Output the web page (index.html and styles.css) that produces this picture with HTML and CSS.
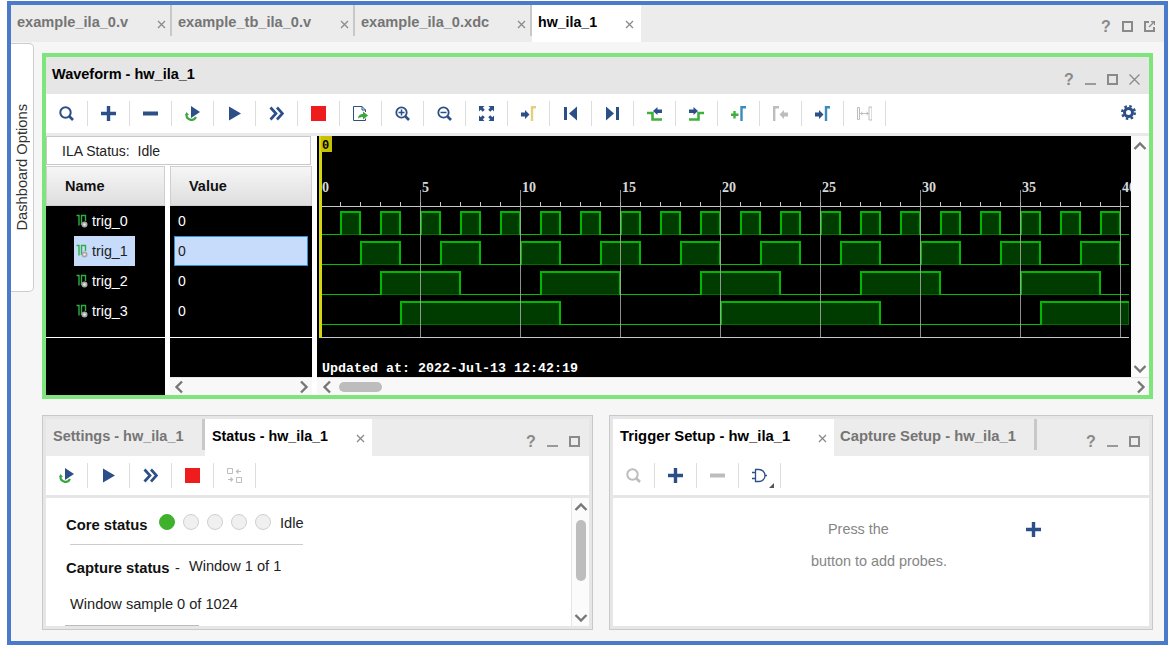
FILE: index.html
```html
<!DOCTYPE html>
<html lang="en">

<head>
    <meta charset="UTF-8">
    <title>hw_ila_1</title>
    <link rel="stylesheet" href="styles.css">
</head>

<body>
    <!-- shared icons -->
    <svg class="sprite">
        <symbol id="i-search" viewBox="0 0 15 15">
            <circle cx="6.5" cy="6.5" r="5.2" fill="none" stroke="currentColor" stroke-width="2" />
            <path d="M10.5 10.5l3.5 3.5" stroke="currentColor" stroke-width="2.6" />
        </symbol>
        <symbol id="i-plus" viewBox="0 0 15 15">
            <path d="M7.5 0v15M0 7.5h15" stroke="currentColor" stroke-width="3.4" />
        </symbol>
        <symbol id="i-minus" viewBox="0 0 15 15">
            <rect y="5.5" width="15" height="4" fill="currentColor" />
        </symbol>
        <symbol id="i-run" viewBox="0 0 15 15">
            <path d="M1.5 8.5a5 5 0 0 0 9.5 2.5" fill="none" stroke="#3ba63b" stroke-width="2.2" />
            <path d="M0 9l1.5-3 2.5 3z" fill="#3ba63b" />
            <path d="M6 0l9 6-9 6z" fill="currentColor" />
        </symbol>
        <symbol id="i-play" viewBox="0 0 15 15">
            <path d="M2 .5L14 7.5 2 14.5z" fill="currentColor" />
        </symbol>
        <symbol id="i-ff" viewBox="0 0 15 15">
            <path d="M1.5 1.5L7 7.5 1.5 13.5M8 1.5l5.5 6-5.5 6" fill="none" stroke="currentColor" stroke-width="2.7" />
        </symbol>
        <symbol id="i-stop" viewBox="0 0 15 15">
            <rect width="15" height="15" fill="#ee1c1c" />
        </symbol>
        <symbol id="i-export" viewBox="0 0 15 15">
            <path d="M.5.5H9L12.5 4v2M12.5 12.5v2H.5V.5M9 .5V4h3.5" fill="none" stroke="currentColor" />
            <path d="M5 12.5c0-3 2-4.5 5-4.5V5.5l5 4-5 4V11c-2 0-3.5.5-5 1.5z" fill="#3ba63b" />
        </symbol>
        <symbol id="i-zoomin" viewBox="0 0 15 15">
            <circle cx="6.5" cy="6.5" r="5.2" fill="none" stroke="currentColor" stroke-width="1.8" />
            <path d="M3.5 6.5h6M6.5 3.5v6" stroke="currentColor" stroke-width="1.5" />
            <path d="M10.5 10.5l3.5 3.5" stroke="currentColor" stroke-width="2.6" />
        </symbol>
        <symbol id="i-zoomout" viewBox="0 0 15 15">
            <circle cx="6.5" cy="6.5" r="5.2" fill="none" stroke="currentColor" stroke-width="1.8" />
            <path d="M3.5 6.5h6" stroke="currentColor" stroke-width="1.5" />
            <path d="M10.5 10.5l3.5 3.5" stroke="currentColor" stroke-width="2.6" />
        </symbol>
        <symbol id="i-fit" viewBox="0 0 15 15">
            <path d="M0 0h5.5L3.8 1.7l2 2-2.1 2.1-2-2L0 5.5z" fill="currentColor" />
            <path d="M15 0H9.5l1.7 1.7-2 2 2.1 2.1 2-2L15 5.5z" fill="currentColor" />
            <path d="M0 15h5.5l-1.7-1.7 2-2-2.1-2.1-2 2L0 9.5z" fill="currentColor" />
            <path d="M15 15H9.5l1.7-1.7-2-2 2.1-2.1 2 2 1.700-1.700z" fill="currentColor" />
        </symbol>
        <symbol id="i-cursor" viewBox="0 0 15 15">
            <path d="M0 6.5h4V4l4.5 4.5L4 13v-2.500H0z" fill="currentColor" />
            <path d="M11 15V1.200h4" fill="none" stroke="#e5cf7a" stroke-width="2.400" />
        </symbol>
        <symbol id="i-first" viewBox="0 0 15 15">
            <path d="M1 1h3v13H1zM14 .5v14L6 7.500z" fill="currentColor" />
        </symbol>
        <symbol id="i-last" viewBox="0 0 15 15">
            <path d="M11 1h3v13h-3zM1 .5v14l8-7z" fill="currentColor" />
        </symbol>
        <symbol id="i-prevedge" viewBox="0 0 15 15">
            <path d="M0 7h5.500v6.500H15" fill="none" stroke="#3fb03f" stroke-width="2.600" />
            <path d="M15 3.500h-4.500v-2.500l-4.500 4 4.500 4V7H15z" fill="currentColor" />
        </symbol>
        <symbol id="i-nextedge" viewBox="0 0 15 15">
            <path d="M0 13.500h9.500V7H15" fill="none" stroke="#3fb03f" stroke-width="2.600" />
            <path d="M0 3.500h4.500v-2.500l4.500 4-4.500 4V7H0z" fill="currentColor" />
        </symbol>
        <symbol id="i-addmark" viewBox="0 0 15 15">
            <path d="M3.500 5v7.500M0 8.700h7.500" stroke="#3fb03f" stroke-width="2.400" />
            <path d="M10.500 15V1.200H15" fill="none" stroke="#3a8dbb" stroke-width="2.400" />
        </symbol>
        <symbol id="i-prevmark" viewBox="0 0 15 15">
            <path d="M1.200 15V1.200H6" fill="none" stroke="currentColor" stroke-width="2.400" />
            <path d="M15 6.500h-4V4L6.500 8.500 11 13v-2.500h4z" fill="currentColor" />
        </symbol>
        <symbol id="i-nextmark" viewBox="0 0 15 15">
            <path d="M0 6.500h4V4l4.500 4.500L4 13v-2.500H0z" fill="currentColor" />
            <path d="M11 15V1.200h4" fill="none" stroke="#3a8dbb" stroke-width="2.400" />
        </symbol>
        <symbol id="i-gap" viewBox="0 0 15 15">
            <path d="M.500 1.500h2v12h-2zM12 1h3v13h-3z" fill="none" stroke="currentColor" />
            <path d="M3.500 7.500h8M5.500 6l-2 1.500 2 1.500M9.500 6l2 1.500-2 1.500" fill="none" stroke="currentColor" />
        </symbol>
        <symbol id="i-gear" viewBox="0 0 15 15">
            <circle cx="7.500" cy="7.500" r="6.300" fill="none" stroke="currentColor" stroke-width="2.400" stroke-dasharray="2.500 2.450" />
            <circle cx="7.500" cy="7.500" r="4" fill="none" stroke="currentColor" stroke-width="3" />
        </symbol>
        <symbol id="i-swap" viewBox="0 0 15 15">
            <path d="M.500.500h5v5h-5zM9.500 9.500h5v5h-5z" fill="none" stroke="currentColor" />
            <path d="M14 3.500H10M11.500 1.500L9.500 3.500l2 2M1 11.500h4M3.500 9.500l2 2-2 2" fill="none" stroke="currentColor" stroke-width="1.200" />
        </symbol>
        <symbol id="i-gate" viewBox="0 0 15 15">
            <path d="M3.500 1.500H7a6 6 0 0 1 0 12H3.500z" fill="none" stroke="currentColor" stroke-width="1.300" />
            <path d="M0 4.500h3.500M0 10.500h3.500M13 7.500h2" stroke="currentColor" stroke-width="1.300" />
        </symbol>
        <symbol id="i-signal" viewBox="0 0 12 14">
            <path d="M.500 1.500h2.500v10M5.500 11V1.500h4V7" fill="none" stroke="#2fae45" stroke-width="1.400" />
            <circle cx="8.500" cy="10.500" r="3" fill="#a6a6a6" />
            <circle cx="8.500" cy="10.500" r="1.200" fill="#eee" />
        </symbol>
        <symbol id="i-close" viewBox="0 0 9 9">
            <path d="M1 1l7 7M8 1L1 8" stroke="#8a8a8a" stroke-width="1.300" />
        </symbol>
        <symbol id="i-winclose" viewBox="0 0 11 11">
            <path d="M.500.500l10 10M10.500.500l-10 10" stroke="#8a8a8a" stroke-width="1.300" />
        </symbol>
        <symbol id="i-min" viewBox="0 0 11 11">
            <rect y="9" width="11" height="2" fill="#9a9a9a" />
        </symbol>
        <symbol id="i-max" viewBox="0 0 11 11">
            <rect x="1" y="1" width="9" height="9" fill="none" stroke="#8a8a8a" stroke-width="2" />
        </symbol>
        <symbol id="i-float" viewBox="0 0 11 11">
            <path d="M5 1H1v9h9V6" fill="none" stroke="#8a8a8a" stroke-width="2" />
            <path d="M5 6l5-5M7 .500h3.500V4" fill="none" stroke="#8a8a8a" stroke-width="1.300" />
        </symbol>
        <symbol id="i-chev" viewBox="0 0 14 14">
            <path d="M1.500 10L7 4.500l5.500 5.500" fill="none" stroke="#777" stroke-width="2.400" />
        </symbol>
    </svg>

    <div class="frame">
        <div class="tabbar">
            <div class="tab w-ila">
                <span>example_ila_0.v</span>
                <svg class="close"><use href="#i-close" /></svg>
            </div>
            <div class="tab w-tb">
                <span>example_tb_ila_0.v</span>
                <svg class="close"><use href="#i-close" /></svg>
            </div>
            <div class="tab w-xdc">
                <span>example_ila_0.xdc</span>
                <svg class="close"><use href="#i-close" /></svg>
            </div>
            <div class="tab active w-hw">
                <span>hw_ila_1</span>
                <svg class="close"><use href="#i-close" /></svg>
            </div>
            <div class="win-icons top">
                <span class="help">?</span>
                <svg class="win"><use href="#i-max" /></svg>
                <svg class="win"><use href="#i-float" /></svg>
            </div>
        </div>

        <div class="workspace">
            <div class="side-tab"><span>Dashboard Options</span></div>

            <div class="panels">
                <div class="waveform">
                    <div class="wave-head">
                        <span class="wave-title">Waveform - hw_ila_1</span>
                        <div class="win-icons">
                            <span class="help">?</span>
                            <svg class="win"><use href="#i-min" /></svg>
                            <svg class="win"><use href="#i-max" /></svg>
                            <svg class="win"><use href="#i-winclose" /></svg>
                        </div>
                    </div>

                    <div class="toolbar">
                        <div class="btn"><svg class="ic"><use href="#i-search" /></svg></div>
                        <div class="btn"><svg class="ic"><use href="#i-plus" /></svg></div>
                        <div class="btn"><svg class="ic"><use href="#i-minus" /></svg></div>
                        <div class="btn"><svg class="ic"><use href="#i-run" /></svg></div>
                        <div class="btn"><svg class="ic"><use href="#i-play" /></svg></div>
                        <div class="btn"><svg class="ic"><use href="#i-ff" /></svg></div>
                        <div class="btn"><svg class="ic"><use href="#i-stop" /></svg></div>
                        <div class="btn"><svg class="ic"><use href="#i-export" /></svg></div>
                        <div class="btn"><svg class="ic"><use href="#i-zoomin" /></svg></div>
                        <div class="btn"><svg class="ic"><use href="#i-zoomout" /></svg></div>
                        <div class="btn"><svg class="ic"><use href="#i-fit" /></svg></div>
                        <div class="btn"><svg class="ic"><use href="#i-cursor" /></svg></div>
                        <div class="btn"><svg class="ic"><use href="#i-first" /></svg></div>
                        <div class="btn"><svg class="ic"><use href="#i-last" /></svg></div>
                        <div class="btn"><svg class="ic"><use href="#i-prevedge" /></svg></div>
                        <div class="btn"><svg class="ic"><use href="#i-nextedge" /></svg></div>
                        <div class="btn"><svg class="ic"><use href="#i-addmark" /></svg></div>
                        <div class="btn"><svg class="ic off"><use href="#i-prevmark" /></svg></div>
                        <div class="btn"><svg class="ic"><use href="#i-nextmark" /></svg></div>
                        <div class="btn"><svg class="ic off"><use href="#i-gap" /></svg></div>
                        <div class="gear"><svg class="ic"><use href="#i-gear" /></svg></div>
                    </div>

                    <div class="wave-body">
                        <div class="signals">
                            <div class="ila-status">ILA Status:&nbsp; Idle</div>
                            <div class="sig-cols">
                                <div class="names">
                                    <div class="col-head name-head">Name</div>
                                    <div class="sig-row"><span class="sig-name"><svg class="sig-ic"><use href="#i-signal" /></svg>trig_0</span></div>
                                    <div class="sig-row"><span class="sig-name selected"><svg class="sig-ic"><use href="#i-signal" /></svg>trig_1</span></div>
                                    <div class="sig-row"><span class="sig-name"><svg class="sig-ic"><use href="#i-signal" /></svg>trig_2</span></div>
                                    <div class="sig-row"><span class="sig-name"><svg class="sig-ic"><use href="#i-signal" /></svg>trig_3</span></div>
                                    <div class="col-rule"></div>
                                </div>
                                <div class="values">
                                    <div class="col-head value-head">Value</div>
                                    <div class="val-rows">
                                        <div class="val-row">0</div>
                                        <div class="val-row selected">0</div>
                                        <div class="val-row">0</div>
                                        <div class="val-row">0</div>
                                        <div class="col-rule"></div>
                                    </div>
                                    <div class="hscroll val-scroll">
                                        <svg class="chev left"><use href="#i-chev" /></svg>
                                        <svg class="chev right"><use href="#i-chev" /></svg>
                                    </div>
                                </div>
                            </div>
                        </div>

                        <div class="wave-view">
                            <div class="wave-top">
                                <svg class="wave-svg" viewBox="317 136 814 241">
                                    <rect x="317" y="136" width="814" height="241" fill="#000" />

                                    <path class="ruler" d="M322 206.500H1129M322 337.500H1129" />
                                    <path class="ticks" d="M340 204H1130" />
                                    <path class="ruler" d="M321.500 182V206" />

                                    <path class="low" d="M322 234.500H1129M322 264.500H1129M322 294.500H1129M322 324.500H1129" />

                                    <!-- trig_0 -->
                                    <path class="block" d="M340.500 211.500h20v23h-20z m40 0h20v23h-20z m40 0h20v23h-20z m40 0h20v23h-20z m40 0h20v23h-20z m40 0h20v23h-20z m40 0h20v23h-20z m40 0h20v23h-20z m40 0h20v23h-20z m40 0h20v23h-20z m40 0h20v23h-20z m40 0h20v23h-20z m40 0h20v23h-20z m40 0h20v23h-20z m40 0h20v23h-20z m40 0h20v23h-20z m40 0h20v23h-20z m40 0h20v23h-20z m40 0h20v23h-20z m40 0h20v23h-20z" />
                                    <path class="edge" d="M341 235v-23h19v23 m21 0v-23h19v23 m21 0v-23h19v23 m21 0v-23h19v23 m21 0v-23h19v23 m21 0v-23h19v23 m21 0v-23h19v23 m21 0v-23h19v23 m21 0v-23h19v23 m21 0v-23h19v23 m21 0v-23h19v23 m21 0v-23h19v23 m21 0v-23h19v23 m21 0v-23h19v23 m21 0v-23h19v23 m21 0v-23h19v23 m21 0v-23h19v23 m21 0v-23h19v23 m21 0v-23h19v23 m21 0v-23h19v23" />

                                    <!-- trig_1 -->
                                    <path class="block" d="M360.500 241.500h40v23h-40z m80 0h40v23h-40z m80 0h40v23h-40z m80 0h40v23h-40z m80 0h40v23h-40z m80 0h40v23h-40z m80 0h40v23h-40z m80 0h40v23h-40z m80 0h40v23h-40z m80 0h40v23h-40z" />
                                    <path class="edge" d="M361 265v-23h39v23 m41 0v-23h39v23 m41 0v-23h39v23 m41 0v-23h39v23 m41 0v-23h39v23 m41 0v-23h39v23 m41 0v-23h39v23 m41 0v-23h39v23 m41 0v-23h39v23 m41 0v-23h39v23" />

                                    <!-- trig_2 -->
                                    <path class="block" d="M380.500 271.500h80v23h-80z m160 0h80v23h-80z m160 0h80v23h-80z m160 0h80v23h-80z m160 0h80v23h-80z" />
                                    <path class="edge" d="M381 295v-23h79v23 m81 0v-23h79v23 m81 0v-23h79v23 m81 0v-23h79v23 m81 0v-23h79v23" />

                                    <!-- trig_3 -->
                                    <path class="block" d="M400.500 301.500h160v23h-160z m320 0h160v23h-160z m320 0h88v23h-88z" />
                                    <path class="edge" d="M401 325v-23h159v23 m161 0v-23h159v23 m161 0v-23h88" />

                                    <path class="major" d="M420.500 190V337M520.500 190V337M620.500 190V337M720.500 190V337M820.500 190V337M920.500 190V337M1020.500 190V337M1120.500 190V337" />

                                    <g class="ruler-num">
                                        <text x="322" y="192">0</text>
                                        <text x="422" y="192">5</text>
                                        <text x="522" y="192">10</text>
                                        <text x="622" y="192">15</text>
                                        <text x="722" y="192">20</text>
                                        <text x="822" y="192">25</text>
                                        <text x="922" y="192">30</text>
                                        <text x="1022" y="192">35</text>
                                        <text x="1122" y="192">40</text>
                                    </g>

                                    <rect x="319" y="136" width="3" height="202" fill="#d6d610" />
                                    <rect x="321" y="136" width="11" height="16" fill="#c8c000" />
                                    <text class="cursor-num" x="322" y="149">0</text>

                                    <text class="updated" x="322" y="372">Updated at: 2022-Jul-13 12:42:19</text>
                                </svg>
                                <div class="vscroll">
                                    <svg class="chev"><use href="#i-chev" /></svg>
                                    <svg class="chev down"><use href="#i-chev" /></svg>
                                </div>
                            </div>
                            <div class="hscroll wave-scroll">
                                <svg class="chev left"><use href="#i-chev" /></svg>
                                <div class="hthumb"></div>
                                <svg class="chev right"><use href="#i-chev" /></svg>
                            </div>
                        </div>
                    </div>
                </div>

                <div class="bottom-row">
                    <div class="panel status-panel">
                        <div class="panel-tabs">
                            <div class="tab w-settings"><span>Settings - hw_ila_1</span></div>
                            <div class="tab active w-status">
                                <span>Status - hw_ila_1</span>
                                <svg class="close"><use href="#i-close" /></svg>
                            </div>
                            <div class="win-icons">
                                <span class="help">?</span>
                                <svg class="win"><use href="#i-min" /></svg>
                                <svg class="win"><use href="#i-max" /></svg>
                            </div>
                        </div>
                        <div class="toolbar">
                            <div class="btn"><svg class="ic"><use href="#i-run" /></svg></div>
                            <div class="btn"><svg class="ic"><use href="#i-play" /></svg></div>
                            <div class="btn"><svg class="ic"><use href="#i-ff" /></svg></div>
                            <div class="btn"><svg class="ic"><use href="#i-stop" /></svg></div>
                            <div class="btn"><svg class="ic off"><use href="#i-swap" /></svg></div>
                        </div>
                        <div class="panel-body">
                            <div class="status-body">
                                <div class="core-row">
                                    <b class="core-label">Core status</b>
                                    <span class="lamp on"></span>
                                    <span class="lamp"></span>
                                    <span class="lamp"></span>
                                    <span class="lamp"></span>
                                    <span class="lamp"></span>
                                    <span class="core-state">Idle</span>
                                </div>
                                <div class="rule-long"></div>
                                <div class="capture-row">
                                    <b class="capture-label">Capture status</b>
                                    <span class="capture-dash">-</span>
                                    <span class="capture-win">Window 1 of 1</span>
                                </div>
                                <div class="sample">Window sample 0 of 1024</div>
                                <div class="rule-short"></div>
                            </div>
                            <div class="vscroll status-scroll">
                                <svg class="chev"><use href="#i-chev" /></svg>
                                <div class="vthumb"></div>
                                <svg class="chev down"><use href="#i-chev" /></svg>
                            </div>
                        </div>
                    </div>

                    <div class="panel trigger-panel">
                        <div class="panel-tabs">
                            <div class="tab active w-trigger">
                                <span>Trigger Setup - hw_ila_1</span>
                                <svg class="close"><use href="#i-close" /></svg>
                            </div>
                            <div class="tab w-capture"><span>Capture Setup - hw_ila_1</span></div>
                            <div class="win-icons">
                                <span class="help">?</span>
                                <svg class="win"><use href="#i-min" /></svg>
                                <svg class="win"><use href="#i-max" /></svg>
                            </div>
                        </div>
                        <div class="toolbar">
                            <div class="btn"><svg class="ic off"><use href="#i-search" /></svg></div>
                            <div class="btn"><svg class="ic"><use href="#i-plus" /></svg></div>
                            <div class="btn"><svg class="ic off"><use href="#i-minus" /></svg></div>
                            <div class="btn more"><svg class="ic"><use href="#i-gate" /></svg></div>
                        </div>
                        <div class="panel-body hint">
                            <div class="hint-top">
                                <span>Press the</span>
                                <svg class="ic"><use href="#i-plus" /></svg>
                            </div>
                            <div class="hint-bottom">button to add probes.</div>
                        </div>
                    </div>
                </div>
            </div>
        </div>
    </div>
</body>

</html>
```

FILE: styles.css
```css
* {
    margin: 0;
    padding: 0;
    box-sizing: border-box;
}

body {
    background-color: #fff;
    font-family: "Liberation Sans", Arial, sans-serif;
    font-size: 14px;
    line-height: 16px;
    color: #222;
    overflow: hidden;
}

.sprite {
    display: none;
}

.frame {
    display: flex;
    flex-direction: column;
    width: 1161px;
    height: 644px;
    margin: 1px 0 0 7px;
    border: 4px solid #4a7bcb;
    background-color: #f6f6f6;
}

/* tabs */
.tabbar,
.panel-tabs {
    display: flex;
    align-items: flex-start;
    height: 37px;
    flex-shrink: 0;
    background-color: #ececec;
}

.tab {
    display: flex;
    align-items: flex-start;
    height: 31px;
    padding: 9px 0 0 6px;
    border-right: 2px solid #c8c8c8;
    font-size: 14.6px;
    font-weight: bold;
    color: #757575;
}

.tab.active {
    height: 37px;
    border-right: 0;
    background-color: #fff;
    color: #000;
}

.close {
    width: 9px;
    height: 9px;
    margin: 6px 4px 0 auto;
}

.tab.active .close {
    margin-right: 7px;
}

.w-ila { width: 161px; }
.w-tb { width: 183px; }
.w-xdc { width: 177px; }
.w-hw { width: 109px; font-size: 14.2px; }
.w-settings { width: 159px; padding-left: 7px; border-right-width: 3px; font-size: 14.5px; }
.w-status { width: 167px; padding-left: 7px; font-size: 14.3px; }
.w-trigger { width: 221px; padding-left: 7px; font-size: 14.8px; }
.w-capture { width: 203px; border-right-width: 3px; font-size: 14.8px; }

.win-icons {
    display: flex;
    align-items: flex-start;
    gap: 11px;
    margin-left: auto;
    padding: 17px 9px 0 0;
}

.win-icons.top {
    padding-top: 16px;
}

.win {
    width: 11px;
    height: 11px;
}

.help {
    width: 9px;
    margin-right: 1px;
    font-size: 16px;
    font-weight: bold;
    line-height: 12px;
    color: #8a8a8a;
}

/* main area */
.workspace {
    display: flex;
    flex: 1;
}

.side-tab {
    display: flex;
    align-items: center;
    justify-content: center;
    width: 23px;
    height: 249px;
    margin-top: 1px;
    border: 1px solid #ccc;
    border-left: 0;
    border-radius: 0 5px 5px 0;
    background-color: #fff;
    color: #333;
}

.side-tab span {
    writing-mode: vertical-rl;
    transform: rotate(180deg);
    font-size: 14.7px;
    white-space: nowrap;
}

.panels {
    display: flex;
    flex-direction: column;
    gap: 16px;
    width: 1119px;
    padding: 11px 0 0 8px;
}

.waveform {
    display: flex;
    flex-direction: column;
    width: 1111px;
    height: 346px;
    border: 4px solid #7de57a;
    background-color: #fff;
}

.wave-head {
    display: flex;
    align-items: flex-start;
    height: 37px;
    flex-shrink: 0;
    background-color: #e6e6e6;
}

.wave-title {
    padding: 9px 0 0 6px;
    font-size: 14.5px;
    font-weight: bold;
    color: #000;
}

/* toolbars */
.toolbar {
    display: flex;
    height: 42px;
    flex-shrink: 0;
    padding: 7px 0 10px;
    border-bottom: 3px solid #e9e9e9;
    background-color: #fff;
}

.btn {
    position: relative;
    display: flex;
    align-items: center;
    justify-content: center;
    width: 42px;
    height: 25px;
    padding-right: 1px;
    border-right: 1px solid #ddd;
}

.btn.more::after {
    content: "";
    position: absolute;
    right: 6px;
    bottom: 0;
    border-left: 5px solid transparent;
    border-bottom: 5px solid #555;
}

.gear {
    display: flex;
    align-items: center;
    margin-left: auto;
    padding-right: 13px;
}

.ic {
    width: 15px;
    height: 15px;
    color: #2d4f87;
}

.ic.off {
    color: #bdbdbd;
}

/* signal list */
.wave-body {
    display: flex;
    flex: 1;
    min-height: 0;
}

.signals {
    display: flex;
    flex-direction: column;
    width: 271px;
    padding-right: 4px;
}

.ila-status {
    width: 265px;
    height: 29px;
    margin-bottom: 1px;
    padding: 6px 0 0 15px;
    border: 1px solid #c8c8c8;
    color: #222;
}

.sig-cols {
    display: flex;
    flex: 1;
    gap: 5px;
}

.names {
    width: 119px;
    background-color: #000;
}

.values {
    display: flex;
    flex-direction: column;
    width: 142px;
}

.col-head {
    height: 40px;
    padding-top: 11px;
    border: 1px solid #cfcfcf;
    background: linear-gradient(#f6f6f6, #dedede);
    font-size: 14.5px;
    font-weight: bold;
    color: #111;
}

.name-head {
    padding-left: 18px;
}

.value-head {
    padding-left: 18px;
}

.sig-row {
    height: 30px;
    padding-left: 28px;
}

.sig-name {
    display: flex;
    align-items: center;
    width: 61px;
    height: 30px;
    padding-left: 2px;
    font-size: 14.3px;
    color: #fff;
}

.sig-name.selected {
    background-color: #c7dcfb;
    color: #222;
}

.sig-ic {
    width: 12px;
    height: 14px;
    margin-right: 4px;
}

.col-rule {
    height: 1px;
    margin-top: 11px;
    background-color: #fff;
}

.val-rows {
    flex: 1;
    background-color: #000;
}

.val-row {
    display: flex;
    align-items: center;
    width: 134px;
    height: 30px;
    margin-left: 4px;
    padding-left: 4px;
    color: #fff;
}

.val-row.selected {
    border: 1px solid #3a8dd4;
    padding-left: 3px;
    background-color: #c7dcfb;
    color: #222;
}

/* scrollbars */
.hscroll {
    display: flex;
    align-items: center;
    height: 18px;
    flex-shrink: 0;
    border-top: 1px solid #e6e6e6;
    background-color: #f8f8f8;
}

.val-scroll {
    padding: 0 1px 0 2px;
    justify-content: space-between;
}

.wave-scroll {
    padding: 0 1px 0 3px;
}

.hthumb {
    width: 43px;
    height: 10px;
    margin-left: 5px;
    border-radius: 5px;
    background-color: #bdbdbd;
}

.wave-scroll .right {
    margin-left: auto;
}

.vscroll {
    display: flex;
    flex-direction: column;
    align-items: center;
    justify-content: space-between;
    width: 18px;
    padding: 3px 0 1px;
    background-color: #fbfbfb;
}

.chev {
    width: 14px;
    height: 14px;
    flex-shrink: 0;
}

.chev.down { transform: rotate(180deg); }
.chev.left { transform: rotate(-90deg); }
.chev.right { transform: rotate(90deg); }

.vthumb {
    width: 10px;
    height: 61px;
    margin: 6px 0 auto;
    border-radius: 5px;
    background-color: #bdbdbd;
}

/* wave canvas */
.wave-view {
    display: flex;
    flex-direction: column;
    width: 832px;
}

.wave-top {
    display: flex;
    height: 241px;
}

.wave-svg {
    display: block;
    width: 814px;
    height: 241px;
}

.ruler {
    fill: none;
    stroke: #c8c8c8;
}

.ticks {
    fill: none;
    stroke: #c8c8c8;
    stroke-width: 4;
    stroke-dasharray: 1 19;
}

.low {
    fill: none;
    stroke: #00c000;
}

.block {
    fill: #003c00;
    stroke: #006c00;
}

.edge {
    fill: none;
    stroke: #00b800;
    stroke-width: 2;
}

.major {
    fill: none;
    stroke: #a8a8a8;
    opacity: 0.85;
}

.ruler-num text {
    font-family: "Liberation Serif", serif;
    font-size: 14px;
    font-weight: bold;
    fill: #d8d8d8;
}

.cursor-num {
    font-family: "Liberation Mono", monospace;
    font-size: 12px;
    font-weight: bold;
    fill: #000;
}

.updated {
    font-family: "Liberation Mono", monospace;
    font-size: 13.33px;
    font-weight: bold;
    fill: #fff;
}

/* bottom panels */
.bottom-row {
    display: flex;
    gap: 16px;
    height: 215px;
}

.panel {
    display: flex;
    flex-direction: column;
    padding: 3px;
    border: 1px solid #c9c9c9;
    background-color: #e6e6e6;
}

.status-panel {
    width: 551px;
}

.trigger-panel {
    width: 544px;
}

.panel .toolbar {
    border-bottom-color: #e6e6e6;
}

.panel-body {
    display: flex;
    flex: 1;
    min-height: 0;
    background-color: #fff;
}

.status-body {
    flex: 1;
    padding: 14px 0 0 20px;
    overflow: hidden;
    font-size: 14.6px;
}

.status-scroll {
    padding: 2px 0 1px;
    border-left: 1px solid #e6e6e6;
}

.core-row {
    display: flex;
    align-items: flex-start;
    height: 32px;
}

.core-label {
    width: 81px;
    margin: 5px 12px 0 0;
    font-size: 14.8px;
    white-space: nowrap;
    color: #111;
}

.lamp {
    width: 16px;
    height: 16px;
    margin: 2px 8px 0 0;
    border: 1px solid #cfcfcf;
    border-radius: 50%;
    background-color: #f0f0f0;
}

.lamp.on {
    border-color: #3fb12c;
    background-color: #3fb12c;
}

.core-state {
    margin: 3px 0 0 1px;
}

.rule-long {
    width: 233px;
    height: 1px;
    margin-left: 4px;
    background-color: #ccc;
}

.capture-row {
    display: flex;
    align-items: flex-start;
    height: 31px;
}

.capture-label {
    width: 103px;
    margin-top: 15px;
    font-size: 14.8px;
    white-space: nowrap;
    color: #111;
}

.capture-dash {
    margin: 15px 0 0 6px;
}

.capture-win {
    margin: 13px 0 0 9px;
}

.sample {
    margin: 20px 0 0 4px;
}

.rule-short {
    width: 134px;
    height: 1px;
    margin: 13px 0 0 -1px;
    background-color: #bbb;
}

.hint {
    flex-direction: column;
    font-size: 14.4px;
    color: #858585;
}

.hint-top {
    display: flex;
    align-items: center;
    padding: 23px 0 0 215px;
}

.hint-top span {
    width: 198px;
}

.hint-bottom {
    padding: 16px 0 0 198px;
}
```
